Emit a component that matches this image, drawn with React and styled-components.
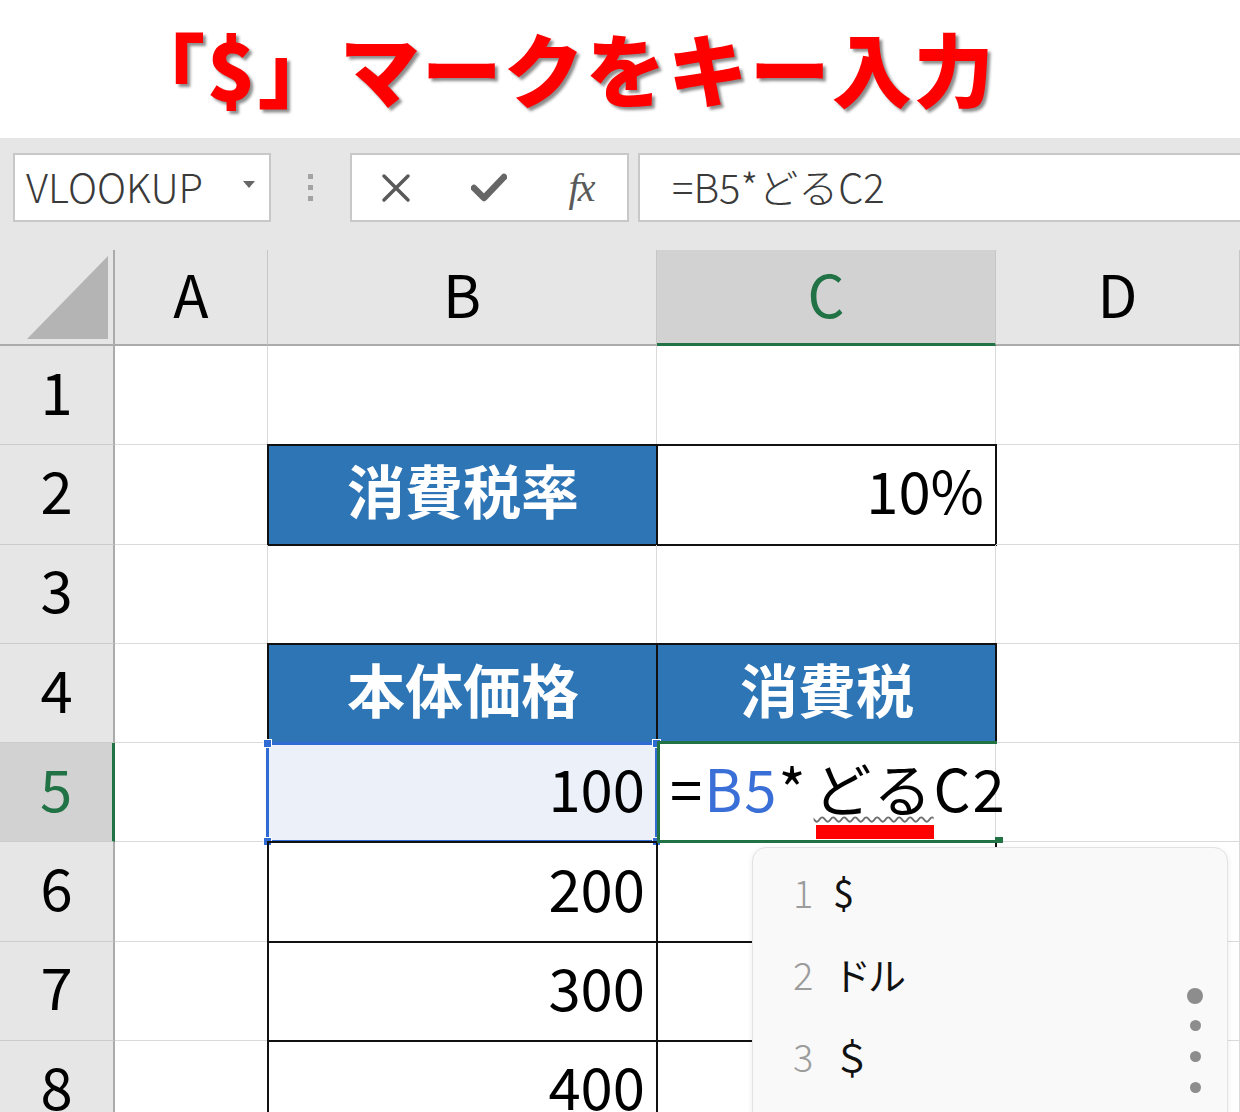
import React from 'react';
import styled, { createGlobalStyle } from 'styled-components';

const JP = `"Noto Sans CJK JP", "Noto Sans", sans-serif`;

const Global = createGlobalStyle`
  html, body { margin: 0; padding: 0; background: #fff; }
  body { font-family: ${JP}; overflow: hidden; }
  * { box-sizing: border-box; }
`;

const Page = styled.div`
  width: 1240px;
  height: 1112px;
  overflow: hidden;
  display: flex;
  flex-direction: column;
`;

const TitleBar = styled.header`
  height: 138px;
  flex: none;
  background: #fff;
  display: flex;
  align-items: center;
  padding-left: 125px;
`;

const Title = styled.h1`
  margin: 0;
  font-family: ${JP};
  font-weight: 900;
  font-size: 80px;
  line-height: 1;
  letter-spacing: 2px;
  color: #ff0000;
  text-shadow: 3px 3px 3px rgba(0, 0, 0, 0.45);
  white-space: nowrap;
  margin-top: -6px;
`;

const Workspace = styled.div`
  flex: 1;
  background: #e6e6e6;
  display: flex;
  flex-direction: column;
  min-height: 0;
`;

const FormulaBar = styled.div`
  flex: none;
  height: 112px;
  padding: 15px 0 0 13px;
  display: flex;
  align-items: flex-start;
`;

const Field = styled.div`
  height: 69px;
  background: #fff;
  border: 2px solid #c8c8c8;
  display: flex;
  align-items: center;
`;

const NameBox = styled(Field)`
  width: 258px;
  padding: 0 14px 4px 11px;
  justify-content: space-between;
  font-size: 40px;
  font-weight: 300;
  color: #3a3a3a;
`;

const Caret = styled.span`
  width: 0;
  height: 0;
  border-left: 6px solid transparent;
  border-right: 6px solid transparent;
  border-top: 7px solid #666;
  margin-top: -2px;
`;

const Grip = styled.div`
  width: 79px;
  height: 69px;
  display: flex;
  flex-direction: column;
  align-items: center;
  justify-content: center;
  gap: 6px;
`;

const GripDot = styled.span`
  width: 5px;
  height: 5px;
  background: #a3a3a3;
`;

const ButtonGroup = styled(Field)`
  width: 279px;
  padding: 0 26px 0 24px;
  justify-content: space-between;
`;

const IconButton = styled.span`
  width: 40px;
  display: flex;
  align-items: center;
  justify-content: center;
  color: #5a5a5a;
`;

const FxText = styled.span`
  font-family: "Liberation Serif", "DejaVu Serif", serif;
  font-style: italic;
  font-size: 40px;
  color: #5a5a5a;
  letter-spacing: -2px;
  line-height: 1;
`;

const FormulaInput = styled(Field)`
  flex: 1;
  margin-left: 9px;
  border-right: none;
  padding: 0 0 4px 32px;
  font-size: 40px;
  font-weight: 300;
  color: #3a3a3a;
`;

const SheetWrap = styled.div`
  position: relative;
  flex: 1;
  min-height: 0;
`;

const Sheet = styled.div`
  display: grid;
  grid-template-columns: 115px 153px 389px 339px 1fr;
  grid-template-rows: 96px repeat(8, 99.3px);
  background: #fff;
  font-size: 58px;
  line-height: 1;
`;

const Corner = styled.div`
  background: #e6e6e6;
  border-right: 2px solid #ababab;
  border-bottom: 2px solid #ababab;
  display: flex;
  align-items: flex-end;
  justify-content: flex-end;
  padding: 0 5px 5px 0;
`;

const ColHead = styled.div`
  background: ${(p) => (p.$active ? '#d2d2d2' : '#e6e6e6')};
  border-right: 1px solid #c6c6c6;
  border-bottom: ${(p) => (p.$active ? '3px solid #217346' : '2px solid #ababab')};
  color: ${(p) => (p.$active ? '#217346' : '#000')};
  display: flex;
  align-items: center;
  justify-content: center;
  padding-bottom: 8px;
`;

const RowHead = styled.div`
  background: ${(p) => (p.$active ? '#d2d2d2' : '#e6e6e6')};
  border-right: ${(p) => (p.$active ? '3px solid #217346' : '2px solid #ababab')};
  border-bottom: 1px solid #cccccc;
  color: ${(p) => (p.$active ? '#217346' : '#000')};
  display: flex;
  align-items: center;
  justify-content: center;
  padding-bottom: 11px;
`;

const Cell = styled.div`
  position: relative;
  background: ${(p) => p.$fill || 'transparent'};
  border-right: 1px solid #dadada;
  border-bottom: 1px solid #dadada;
  display: flex;
  align-items: center;
  justify-content: ${(p) => (p.$align === 'right' ? 'flex-end' : p.$align === 'center' ? 'center' : 'flex-start')};
  padding: 0 11px 10px 13px;
  color: ${(p) => (p.$head ? '#fff' : '#000')};
  font-weight: ${(p) => (p.$head ? 700 : 400)};
  white-space: nowrap;
  outline: ${(p) => (p.$boxed ? '2px solid #111' : 'none')};
  outline-offset: -1px;
  z-index: ${(p) => (p.$editing ? 2 : 'auto')};
`;

const SelectionFrame = styled.div`
  position: absolute;
  inset: -1px -2px -2px -2px;
  border: 3px solid #2f6bd3;
  pointer-events: none;
`;

const Handle = styled.span`
  position: absolute;
  width: 9px;
  height: 9px;
  background: #2f6bd3;
  border: 1px solid #fff;
  ${(p) => (p.$top ? 'top: -6px;' : 'bottom: -6px;')}
  ${(p) => (p.$left ? 'left: -6px;' : 'right: -6px;')}
`;

const EditFrame = styled.div`
  position: absolute;
  inset: -2px -2px -2px 0;
  border: 3px solid #217346;
  border-right: none;
  pointer-events: none;
`;

const FillHandle = styled.span`
  position: absolute;
  right: -6px;
  bottom: -3px;
  width: 8px;
  height: 6px;
  background: #217346;
`;

const Formula = styled.span`
  letter-spacing: 2px;
`;

const Ref = styled.span`
  color: #3a6fd8;
`;

const Composing = styled.span`
  position: relative;
  margin-left: 6px;
  text-decoration: underline wavy #6f6f6f 1.5px;
  text-underline-offset: 4px;
  &::after {
    content: '';
    position: absolute;
    left: 2px;
    right: 0;
    bottom: -10px;
    height: 14px;
    background: #ff0000;
  }
`;

const Popup = styled.div`
  position: absolute;
  left: 752px;
  top: 597px;
  width: 476px;
  height: 320px;
  background: #f9f9f9;
  border: 1px solid #e2e2e2;
  border-radius: 14px;
  box-shadow: 0 2px 6px rgba(0, 0, 0, 0.08);
  display: flex;
  padding: 3px 0 0 40px;
`;

const CandidateList = styled.ol`
  list-style: none;
  margin: 0;
  padding: 0;
  flex: 1;
`;

const Candidate = styled.li`
  height: 82px;
  display: flex;
  align-items: center;
  gap: 24px;
  font-size: 38px;
  line-height: 1;
`;

const CandNum = styled.span`
  width: 16px;
  color: #9c9c9c;
  font-weight: 300;
`;

const CandText = styled.span`
  color: #111;
  letter-spacing: -3px;
`;

const ScrollDots = styled.div`
  width: 64px;
  display: flex;
  flex-direction: column;
  align-items: center;
  padding-top: 137px;
`;

const Dot = styled.span`
  width: ${(p) => (p.$big ? 16 : 11)}px;
  height: ${(p) => (p.$big ? 16 : 11)}px;
  border-radius: 50%;
  background: #8d8d8d;
  margin-bottom: ${(p) => (p.$big ? 16 : 20)}px;
`;

const cols = ['A', 'B', 'C', 'D'];

const rows = [
  { n: 1, cells: [{}, {}, {}, {}] },
  {
    n: 2,
    cells: [
      {},
      { text: '消費税率', head: true, boxed: true, align: 'center', fill: '#2e75b6' },
      { text: '10%', boxed: true, align: 'right' },
      {},
    ],
  },
  { n: 3, cells: [{}, {}, {}, {}] },
  {
    n: 4,
    cells: [
      {},
      { text: '本体価格', head: true, boxed: true, align: 'center', fill: '#2e75b6' },
      { text: '消費税', head: true, boxed: true, align: 'center', fill: '#2e75b6' },
      {},
    ],
  },
  { n: 5, active: true, cells: [{}, { text: '100', align: 'right', selected: true, fill: '#ebf0f9' }, { editing: true }, {}] },
  { n: 6, cells: [{}, { text: '200', boxed: true, align: 'right' }, { boxed: true }, {}] },
  { n: 7, cells: [{}, { text: '300', boxed: true, align: 'right' }, { boxed: true }, {}] },
  { n: 8, cells: [{}, { text: '400', boxed: true, align: 'right' }, { boxed: true }, {}] },
];

function CloseIcon() {
  return (
    <svg width="32" height="32" viewBox="0 0 32 32">
      <path d="M4 4 L28 28 M28 4 L4 28" stroke="#5a5a5a" strokeWidth="3.5" strokeLinecap="round" />
    </svg>
  );
}

function CheckIcon() {
  return (
    <svg width="36" height="30" viewBox="0 0 36 30">
      <path d="M3 15 L13 25 L33 4" stroke="#666" strokeWidth="6.5" fill="none" strokeLinecap="round" strokeLinejoin="round" />
    </svg>
  );
}

function CellContent({ c }) {
  if (c.editing) {
    return (
      <>
        <Formula>
          =<Ref>B5</Ref>*<Composing>どる</Composing>C2
        </Formula>
        <EditFrame>
          <FillHandle />
        </EditFrame>
      </>
    );
  }
  return (
    <>
      {c.text}
      {c.selected && (
        <SelectionFrame>
          <Handle $top $left />
          <Handle $top />
          <Handle $left />
          <Handle />
        </SelectionFrame>
      )}
    </>
  );
}

export default function App() {
  return (
    <Page>
      <Global />
      <TitleBar>
        <Title>「$」マークをキー入力</Title>
      </TitleBar>
      <Workspace>
        <FormulaBar>
          <NameBox>
            <span>VLOOKUP</span>
            <Caret />
          </NameBox>
          <Grip>
            <GripDot />
            <GripDot />
            <GripDot />
          </Grip>
          <ButtonGroup>
            <IconButton>
              <CloseIcon />
            </IconButton>
            <IconButton>
              <CheckIcon />
            </IconButton>
            <IconButton>
              <FxText>fx</FxText>
            </IconButton>
          </ButtonGroup>
          <FormulaInput>=B5*どるC2</FormulaInput>
        </FormulaBar>
        <SheetWrap>
          <Sheet>
            <Corner>
              <svg width="81" height="83" viewBox="0 0 81 83">
                <polygon points="81,0 81,83 0,83" fill="#b4b4b4" />
              </svg>
            </Corner>
            {cols.map((c) => (
              <ColHead key={c} $active={c === 'C'}>
                {c}
              </ColHead>
            ))}
            {rows.map((r) => (
              <React.Fragment key={r.n}>
                <RowHead $active={r.active}>{r.n}</RowHead>
                {r.cells.map((c, i) => (
                  <Cell
                    key={i}
                    $fill={c.fill}
                    $head={c.head}
                    $boxed={c.boxed}
                    $align={c.align}
                    $editing={c.editing}
                  >
                    <CellContent c={c} />
                  </Cell>
                ))}
              </React.Fragment>
            ))}
          </Sheet>
          <Popup>
            <CandidateList>
              <Candidate>
                <CandNum>1</CandNum>
                <CandText>$</CandText>
              </Candidate>
              <Candidate>
                <CandNum>2</CandNum>
                <CandText>ドル</CandText>
              </Candidate>
              <Candidate>
                <CandNum>3</CandNum>
                <CandText>＄</CandText>
              </Candidate>
            </CandidateList>
            <ScrollDots>
              <Dot $big />
              <Dot />
              <Dot />
              <Dot />
            </ScrollDots>
          </Popup>
        </SheetWrap>
      </Workspace>
    </Page>
  );
}
